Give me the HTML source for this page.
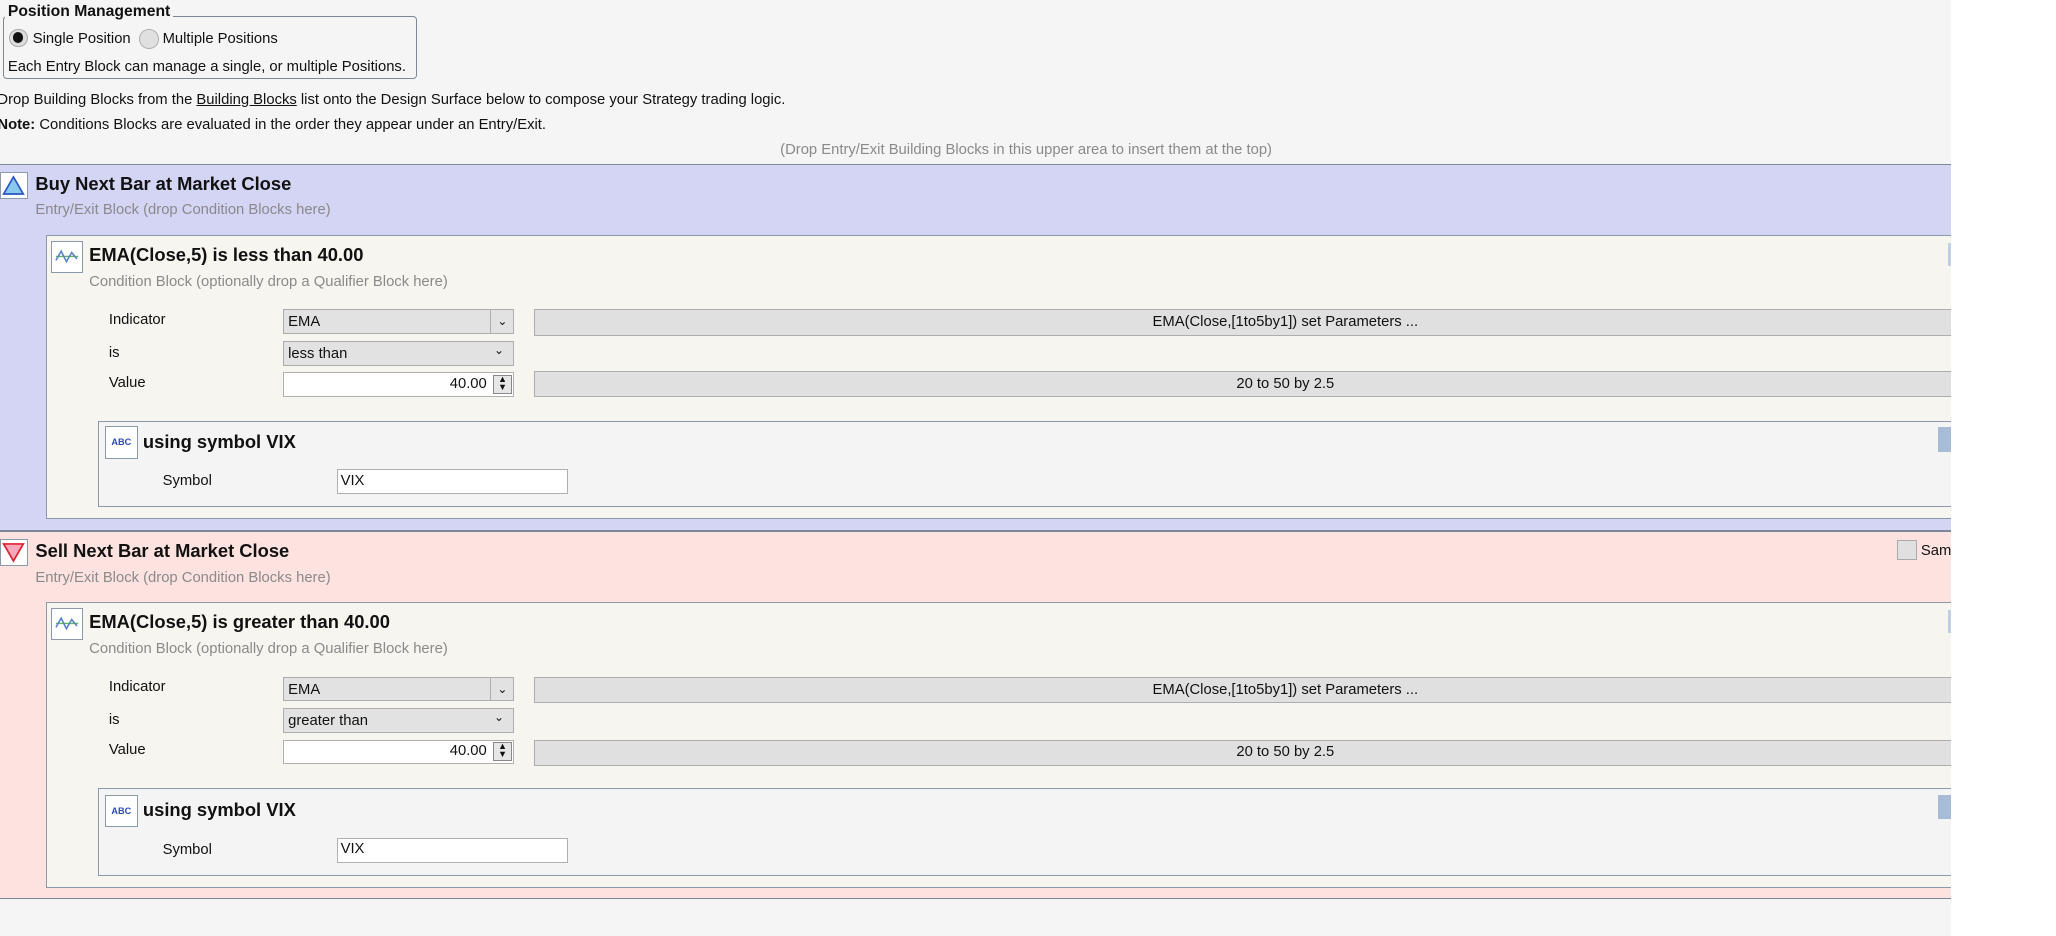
<!DOCTYPE html>
<html><head><meta charset="utf-8"><style>
html,body{margin:0;padding:0;background:#fff;}
body{width:2056px;height:936px;overflow:hidden;}
#w{zoom:1.3112;width:1568px;height:714px;position:relative;font-family:"Liberation Sans",sans-serif;font-size:11.3px;color:#111;}
.a{position:absolute;white-space:nowrap;}
.bg{position:absolute;left:0;top:0;width:1488px;height:714px;background:#f5f5f5;overflow:hidden;}
.b{font-weight:bold;font-size:14px;}
.g{color:#8a8a8a;}
.combo{position:absolute;background:#e2e2e2;border:1px solid #adadad;box-sizing:border-box;height:19px;padding:3px 0 0 3px;}
.btn{position:absolute;background:#e0e0e0;border:1px solid #adadad;box-sizing:border-box;height:20px;text-align:center;padding-top:3px;}
.inp{position:absolute;background:#fff;border:1px solid #b0b0b0;box-sizing:border-box;height:19px;padding:2px 0 0 2px;}
.ib{position:absolute;background:#fff;border:1px solid #8a9aaa;box-sizing:border-box;}
</style></head><body><div id="w"><div class="bg">
<div style="position:absolute;left:2px;top:12px;width:316px;height:48px;border:1.5px solid #7a8898;border-radius:3px;box-sizing:border-box"></div>
<div class="a" style="left:4px;top:2px;background:#f5f5f5;padding:0 2px;font-weight:bold;font-size:12px">Position Management</div>
<div class="a" style="left:7px;top:22px;width:14px;height:14px;border-radius:50%;background:#ddd;border:1px solid #aaa;box-sizing:border-box"><div style="margin:2px;width:8px;height:8px;border-radius:50%;background:#111"></div></div>
<div class="a" style="left:25px;top:24px">Single Position</div>
<div class="a" style="left:106px;top:22px;width:15px;height:15px;border-radius:50%;background:#e0e0e0;border:1px solid #b0b0b0;box-sizing:border-box"></div>
<div class="a" style="left:124px;top:24px">Multiple Positions</div>
<div class="a" style="left:6px;top:45px">Each Entry Block can manage a single, or multiple Positions.</div>
<div class="a" style="left:-2px;top:70px">Drop Building Blocks from the <u>Building Blocks</u> list onto the Design Surface below to compose your Strategy trading logic.</div>
<div class="a" style="left:-2px;top:89px"><b>Note:</b> Conditions Blocks are evaluated in the order they appear under an Entry/Exit.</div>
<div class="a g" style="left:595px;top:108px">(Drop Entry/Exit Building Blocks in this upper area to insert them at the top)</div>

<!-- BUY -->
<div style="position:absolute;left:0;top:125px;width:1488px;height:280px;background:#d4d4f4;border-top:1px solid #7a8898;border-bottom:1px solid #7a8898;box-sizing:border-box"></div>
<div class="ib" style="left:0;top:131px;width:21px;height:21px"><svg width="19" height="19"><polygon points="9.5,3 17,16 2,16" fill="#8ac8ec" stroke="#2a56c8" stroke-width="1.3"/></svg></div>
<div class="a b" style="left:27px;top:132px">Buy Next Bar at Market Close</div>
<div class="a g" style="left:27px;top:154px">Entry/Exit Block (drop Condition Blocks here)</div>
<div style="position:absolute;left:35px;top:179px;width:1460px;height:217px;background:#f7f5ef;border:1px solid #8a9aaa;box-sizing:border-box"></div>
<div class="ib" style="left:39px;top:184px;width:24px;height:24px"><svg width="22" height="22"><line x1="3" y1="11" x2="20" y2="11" stroke="#5cb85c"/><path d="M3 14 L7 7 L11 15 L15 8 L19 13" fill="none" stroke="#5a82c8" stroke-width="1.2"/></svg></div>
<div class="a b" style="left:68px;top:186px">EMA(Close,5) is less than 40.00</div>
<div class="a g" style="left:68px;top:209px">Condition Block (optionally drop a Qualifier Block here)</div>
<div class="a" style="left:83px;top:238px">Indicator</div>
<div class="combo" style="left:216px;top:236px;width:176px">EMA<span style="position:absolute;left:157px;top:0;height:17px;border-left:1px solid #adadad;width:18px;text-align:center;font-size:9px;padding-top:3px;box-sizing:border-box">&#8964;</span></div>
<div class="btn" style="left:407px;top:236px;width:1100px"><span style="position:absolute;left:0;width:1145px">EMA(Close,[1to5by1]) set Parameters ...</span></div>
<div class="a" style="left:83px;top:263px">is</div>
<div class="combo" style="left:216px;top:260px;width:176px">less than<span style="position:absolute;left:160px;top:1px;font-size:9px">&#8964;</span></div>
<div class="a" style="left:83px;top:286px">Value</div>
<div class="inp" style="left:216px;top:284px;width:176px;text-align:right;padding-right:20px">40.00<span style="position:absolute;right:1px;top:1px;width:14px;height:15px;border:1px solid #888;box-sizing:border-box;font-size:7px;line-height:6px;text-align:center;background:#e6e6e6">&#9650;<br>&#9660;</span></div>
<div class="btn" style="left:407px;top:283px;width:1100px"><span style="position:absolute;left:0;width:1145px">20 to 50 by 2.5</span></div>
<div style="position:absolute;left:75px;top:321px;width:1420px;height:66px;background:#f4f4f4;border:1px solid #8a9aaa;box-sizing:border-box"></div>
<div class="ib" style="left:80px;top:325px;width:25px;height:25px;font-size:7px;font-weight:bold;color:#2a4ab8;text-align:center;line-height:23px">ABC</div>
<div class="a b" style="left:109px;top:329px">using symbol VIX</div>
<div class="a" style="left:124px;top:361px">Symbol</div>
<div class="inp" style="left:257px;top:358px;width:176px">VIX</div>
<div style="position:absolute;left:1486px;top:185px;width:4px;height:18px;background:#c0d0e4"></div>
<div style="position:absolute;left:1478px;top:326px;width:12px;height:19px;background:#a8bcd8"></div>

<!-- SELL -->
<div style="position:absolute;left:0;top:405px;width:1488px;height:281px;background:#fde2e0;border-top:1px solid #7a8898;border-bottom:1px solid #7a8898;box-sizing:border-box"></div>
<div class="ib" style="left:0;top:411px;width:21px;height:21px"><svg width="19" height="19"><polygon points="2,3 17,3 9.5,16" fill="#f8a8b8" stroke="#e02030" stroke-width="1.3"/></svg></div>
<div class="a b" style="left:27px;top:412px">Sell Next Bar at Market Close</div>
<div class="a g" style="left:27px;top:435px">Entry/Exit Block (drop Condition Blocks here)</div>
<div style="position:absolute;left:1447px;top:412px;width:15px;height:15px;background:#e0e0e0;border:1px solid #aaa;box-sizing:border-box"></div>
<div class="a" style="left:1465px;top:414px">Same</div>
<div style="position:absolute;left:35px;top:459px;width:1460px;height:218px;background:#f7f5ef;border:1px solid #8a9aaa;box-sizing:border-box"></div>
<div class="ib" style="left:39px;top:464px;width:24px;height:24px"><svg width="22" height="22"><line x1="3" y1="11" x2="20" y2="11" stroke="#5cb85c"/><path d="M3 14 L7 7 L11 15 L15 8 L19 13" fill="none" stroke="#5a82c8" stroke-width="1.2"/></svg></div>
<div class="a b" style="left:68px;top:466px">EMA(Close,5) is greater than 40.00</div>
<div class="a g" style="left:68px;top:489px">Condition Block (optionally drop a Qualifier Block here)</div>
<div class="a" style="left:83px;top:518px">Indicator</div>
<div class="combo" style="left:216px;top:516px;width:176px">EMA<span style="position:absolute;left:157px;top:0;height:17px;border-left:1px solid #adadad;width:18px;text-align:center;font-size:9px;padding-top:3px;box-sizing:border-box">&#8964;</span></div>
<div class="btn" style="left:407px;top:516px;width:1100px"><span style="position:absolute;left:0;width:1145px">EMA(Close,[1to5by1]) set Parameters ...</span></div>
<div class="a" style="left:83px;top:543px">is</div>
<div class="combo" style="left:216px;top:540px;width:176px">greater than<span style="position:absolute;left:160px;top:1px;font-size:9px">&#8964;</span></div>
<div class="a" style="left:83px;top:566px">Value</div>
<div class="inp" style="left:216px;top:564px;width:176px;text-align:right;padding-right:20px">40.00<span style="position:absolute;right:1px;top:1px;width:14px;height:15px;border:1px solid #888;box-sizing:border-box;font-size:7px;line-height:6px;text-align:center;background:#e6e6e6">&#9650;<br>&#9660;</span></div>
<div class="btn" style="left:407px;top:564px;width:1100px"><span style="position:absolute;left:0;width:1145px">20 to 50 by 2.5</span></div>
<div style="position:absolute;left:75px;top:601px;width:1420px;height:67px;background:#f4f4f4;border:1px solid #8a9aaa;box-sizing:border-box"></div>
<div class="ib" style="left:80px;top:606px;width:25px;height:25px;font-size:7px;font-weight:bold;color:#2a4ab8;text-align:center;line-height:23px">ABC</div>
<div class="a b" style="left:109px;top:609px">using symbol VIX</div>
<div class="a" style="left:124px;top:642px">Symbol</div>
<div class="inp" style="left:257px;top:639px;width:176px">VIX</div>
<div style="position:absolute;left:1486px;top:465px;width:4px;height:18px;background:#c0d0e4"></div>
<div style="position:absolute;left:1478px;top:606px;width:12px;height:19px;background:#a8bcd8"></div>
</div></div></body></html>
